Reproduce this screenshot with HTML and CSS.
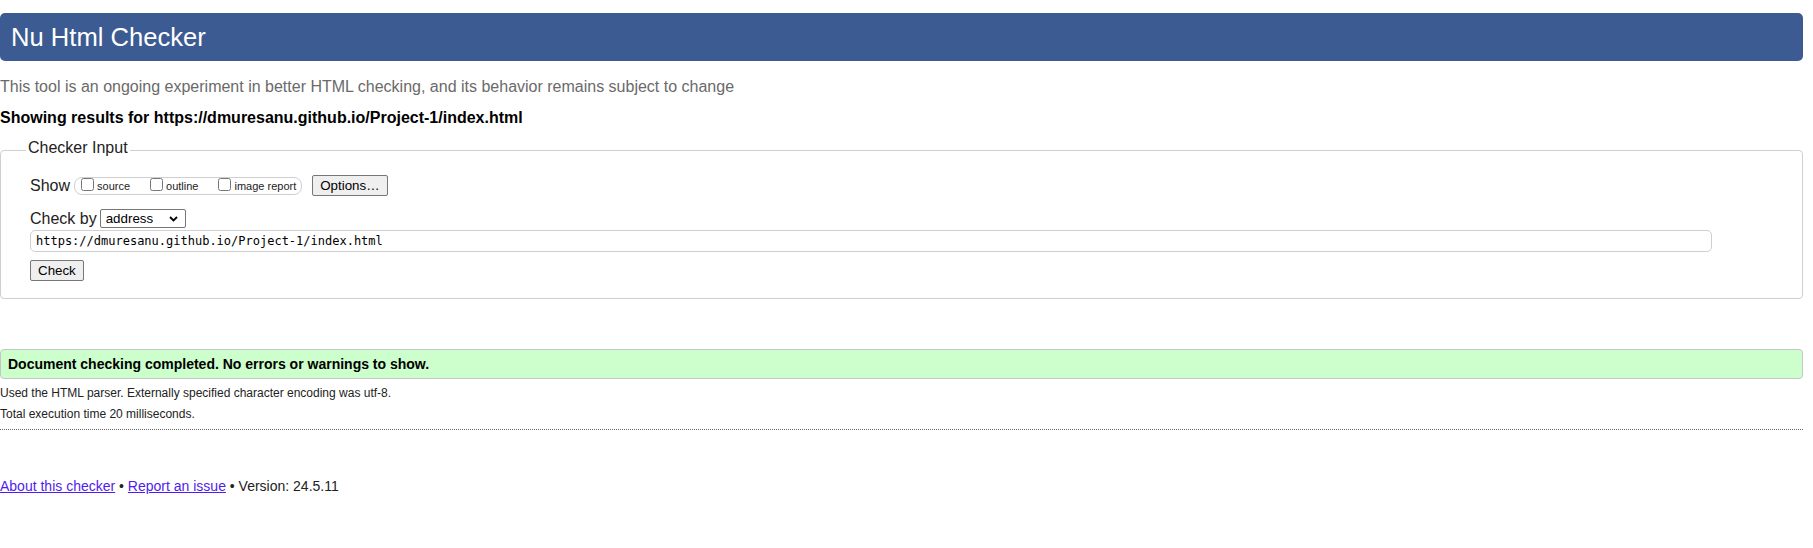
FILE: index.html
```html
<!DOCTYPE html>
<html lang="en">
<head>
<meta charset="utf-8">
<title>Nu Html Checker</title>
<link rel="stylesheet" href="styles.css">
</head>
<body>
<div class="page">
  <h1 class="title">Nu Html Checker</h1>
  <p class="intro">This tool is an ongoing experiment in better HTML checking, and its behavior remains subject to change</p>
  <p class="results-for">Showing results for https://dmuresanu.github.io/Project-1/index.html</p>

  <form class="checker-form">
    <fieldset class="checker-input">
      <legend class="legend">Checker Input</legend>

      <div class="row row-show">
        <span class="row-label">Show</span>
        <div class="show-box">
          <label class="opt"><input type="checkbox" class="cb"><span class="opt-text">source</span></label>
          <label class="opt"><input type="checkbox" class="cb"><span class="opt-text">outline</span></label>
          <label class="opt opt-last"><input type="checkbox" class="cb"><span class="opt-text">image report</span></label>
        </div>
        <button type="button" class="btn btn-options">Options…</button>
      </div>

      <div class="row row-checkby">
        <span class="row-label">Check by</span>
        <div class="select-wrap">
          <select class="select"><option>address</option></select>
          <svg class="chevron" width="9" height="6" viewBox="0 0 9 6"><path d="M1 1 L4.5 4.5 L8 1" fill="none" stroke="#000" stroke-width="1.8"/></svg>
        </div>
      </div>

      <div class="row row-url">
        <input type="url" class="url" value="https://dmuresanu.github.io/Project-1/index.html">
      </div>

      <div class="row row-submit">
        <button type="button" class="btn btn-check">Check</button>
      </div>
    </fieldset>
  </form>

  <p class="success">Document checking completed. No errors or warnings to show.</p>
  <p class="details">Used the HTML parser. Externally specified character encoding was utf-8.</p>
  <p class="details">Total execution time 20 milliseconds.</p>
  <hr class="rule">
  <p class="footer"><a href="#" class="link">About this checker</a> • <a href="#" class="link">Report an issue</a> • Version: 24.5.11</p>
</div>
</body>
</html>
```

FILE: styles.css
```css
html, body {
  margin: 0;
  padding: 0;
  background: #fff;
}

body {
  font-family: "Liberation Sans", Arial, sans-serif;
  color: #000;
}

.page {
  margin-right: 10px;
}

.title {
  margin: 13px 0 0 0;
  padding: 9px 11px;
  background: #3b5b92;
  color: #fff;
  font-size: 25.6px;
  font-weight: normal;
  line-height: 30px;
  border-radius: 5px;
}

.intro {
  margin: 17px 0 0 0;
  font-size: 16px;
  line-height: 18px;
  color: #6a6a6a;
}

.results-for {
  margin: 13px 0 0 0;
  font-size: 16px;
  line-height: 18px;
  font-weight: bold;
}

.checker-form {
  margin: 12px 0 0 0;
}

.checker-input {
  margin: 0;
  padding: 14px 29px 17px 29px;
  border: 1px solid #cfcfcf;
  border-radius: 4px;
  min-width: 0;
}

.legend {
  margin-left: -4px;
  padding: 0 2px 4px 2px;
  font-size: 16px;
  line-height: 18px;
  color: #222;
}

.row {
  display: flex;
}

.row-label {
  font-size: 16px;
  line-height: 18px;
  color: #222;
}

.row-show {
  align-items: center;
  height: 21px;
}

.row-show .row-label {
  margin-right: 4px;
}

.show-box {
  display: flex;
  align-items: flex-start;
  height: 16px;
  border: 1px solid #cfcfcf;
  border-radius: 8px;
  padding: 0 5px 0 2px;
}

.opt {
  display: flex;
  align-items: flex-start;
  margin-right: 16px;
}

.opt-last {
  margin-right: 0;
}

.cb {
  width: 13px;
  height: 13px;
  margin: 0 3px 0 4px;
}

.opt-text {
  font-size: 11px;
  line-height: 16px;
  color: #222;
}

.btn {
  font-family: "Liberation Sans", Arial, sans-serif;
  font-size: 13.333px;
  line-height: 15px;
  color: #000;
  background: #efefef;
  border: 1px solid #767676;
  border-radius: 2px;
  padding: 2px 7px;
}

.btn-options {
  margin-left: 10px;
}

.row-checkby {
  margin-top: 13px;
  align-items: center;
  height: 19px;
}

.row-checkby .row-label {
  margin-right: 3px;
}

.select-wrap {
  position: relative;
  display: flex;
}

.select {
  appearance: none;
  -webkit-appearance: none;
  width: 86px;
  height: 19px;
  margin: 0;
  padding: 0 0 0 5px;
  font-family: "Liberation Sans", Arial, sans-serif;
  font-size: 13.333px;
  color: #000;
  background: #fff;
  border: 1px solid #767676;
  border-radius: 2px;
}

.chevron {
  position: absolute;
  right: 8px;
  top: 7px;
  pointer-events: none;
}

.row-url {
  margin-top: 2px;
}

.url {
  width: calc(100% - 61px);
  height: 22px;
  box-sizing: border-box;
  margin: 0;
  padding: 0 5px;
  font-family: "DejaVu Sans Mono", "Liberation Mono", monospace;
  font-size: 12px;
  color: #000;
  background: #fff;
  border: 1px solid #cfcfcf;
  border-radius: 5px;
}

.row-submit {
  margin-top: 8px;
}

.success {
  margin: 50px 0 0 0;
  padding: 6px 7px;
  font-size: 14px;
  line-height: 16px;
  font-weight: bold;
  background: #ccffcc;
  border: 1px solid #c6c6c6;
  border-radius: 4px;
}

.details {
  margin: 7px 0 0 0;
  font-size: 12px;
  line-height: 14px;
  color: #222;
}

.rule {
  margin: 8px 0 0 0;
  border: 0;
  border-top: 1px dotted #666;
  height: 0;
}

.footer {
  margin: 48px 0 0 0;
  font-size: 14px;
  line-height: 16px;
  color: #222;
}

.link {
  color: #4f1cf0;
}
```
